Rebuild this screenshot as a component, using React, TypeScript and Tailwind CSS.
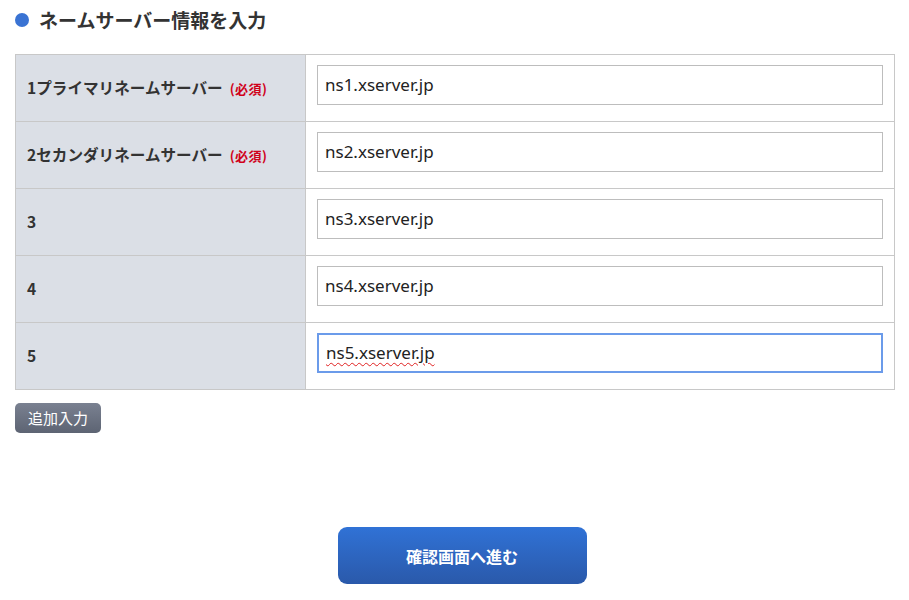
const rows = [
  { label: '1プライマリネームサーバー', required: true, value: 'ns1.xserver.jp' },
  { label: '2セカンダリネームサーバー', required: true, value: 'ns2.xserver.jp' },
  { label: '3', required: false, value: 'ns3.xserver.jp' },
  { label: '4', required: false, value: 'ns4.xserver.jp' },
  { label: '5', required: false, value: 'ns5.xserver.jp', focused: true },
];

export default function App() {
  return (
    <div className="w-[909px] h-[600px] bg-white text-[#333] font-['Noto_Sans_CJK_JP','Noto_Sans',sans-serif]">
      <div className="pl-[15px] pt-[8px]">
        {/* Heading */}
        <h2 className="flex items-center gap-[10px] h-[24px] text-[19px] font-bold text-[#333]">
          <span className="w-[14px] h-[14px] rounded-full bg-[#3a73d3]" />
          ネームサーバー情報を入力
        </h2>

        {/* Table */}
        <table className="mt-[22px] w-[880px] border-collapse">
          <tbody>
            {rows.map((row) => (
              <tr key={row.label} className="h-[67px]">
                <th className="w-[290px] border border-[#c8c8c8] bg-[#dbdfe6] px-[11px] text-left text-[15.6px] font-bold text-[#333]">
                  {row.label}
                  {row.required && (
                    <span className="ml-[7px] text-[13px] font-bold tracking-[0.5px] text-[#d0021b]">(必須)</span>
                  )}
                </th>
                <td className="border border-[#c8c8c8] px-[11px] pt-[10px] pb-[16px] align-top">
                  <div
                    className={`flex h-[40px] items-center border px-[7px] text-[17px] text-[#222] font-['Noto_Sans',sans-serif] ${
                      row.focused ? 'border-[#6b9bea] border-[2px] px-[6px]' : 'border-[#bdbdbd]'
                    }`}
                  >
                    <span
                      className={
                        row.focused
                          ? 'underline decoration-wavy decoration-[#e02020] decoration-1 underline-offset-[3px]'
                          : ''
                      }
                    >
                      {row.value}
                    </span>
                  </div>
                </td>
              </tr>
            ))}
          </tbody>
        </table>

        <button className="mt-[13px] h-[30px] w-[86px] rounded-[5px] bg-gradient-to-b from-[#7a8191] to-[#5d6473] text-[15px] text-white">
          追加入力
        </button>

        <div className="mt-[94px] flex justify-center">
          <button className="h-[57px] w-[249px] rounded-[9px] bg-gradient-to-b from-[#3072d6] to-[#2a59aa] text-[16px] font-bold text-white">
            確認画面へ進む
          </button>
        </div>
      </div>
    </div>
  );
}
